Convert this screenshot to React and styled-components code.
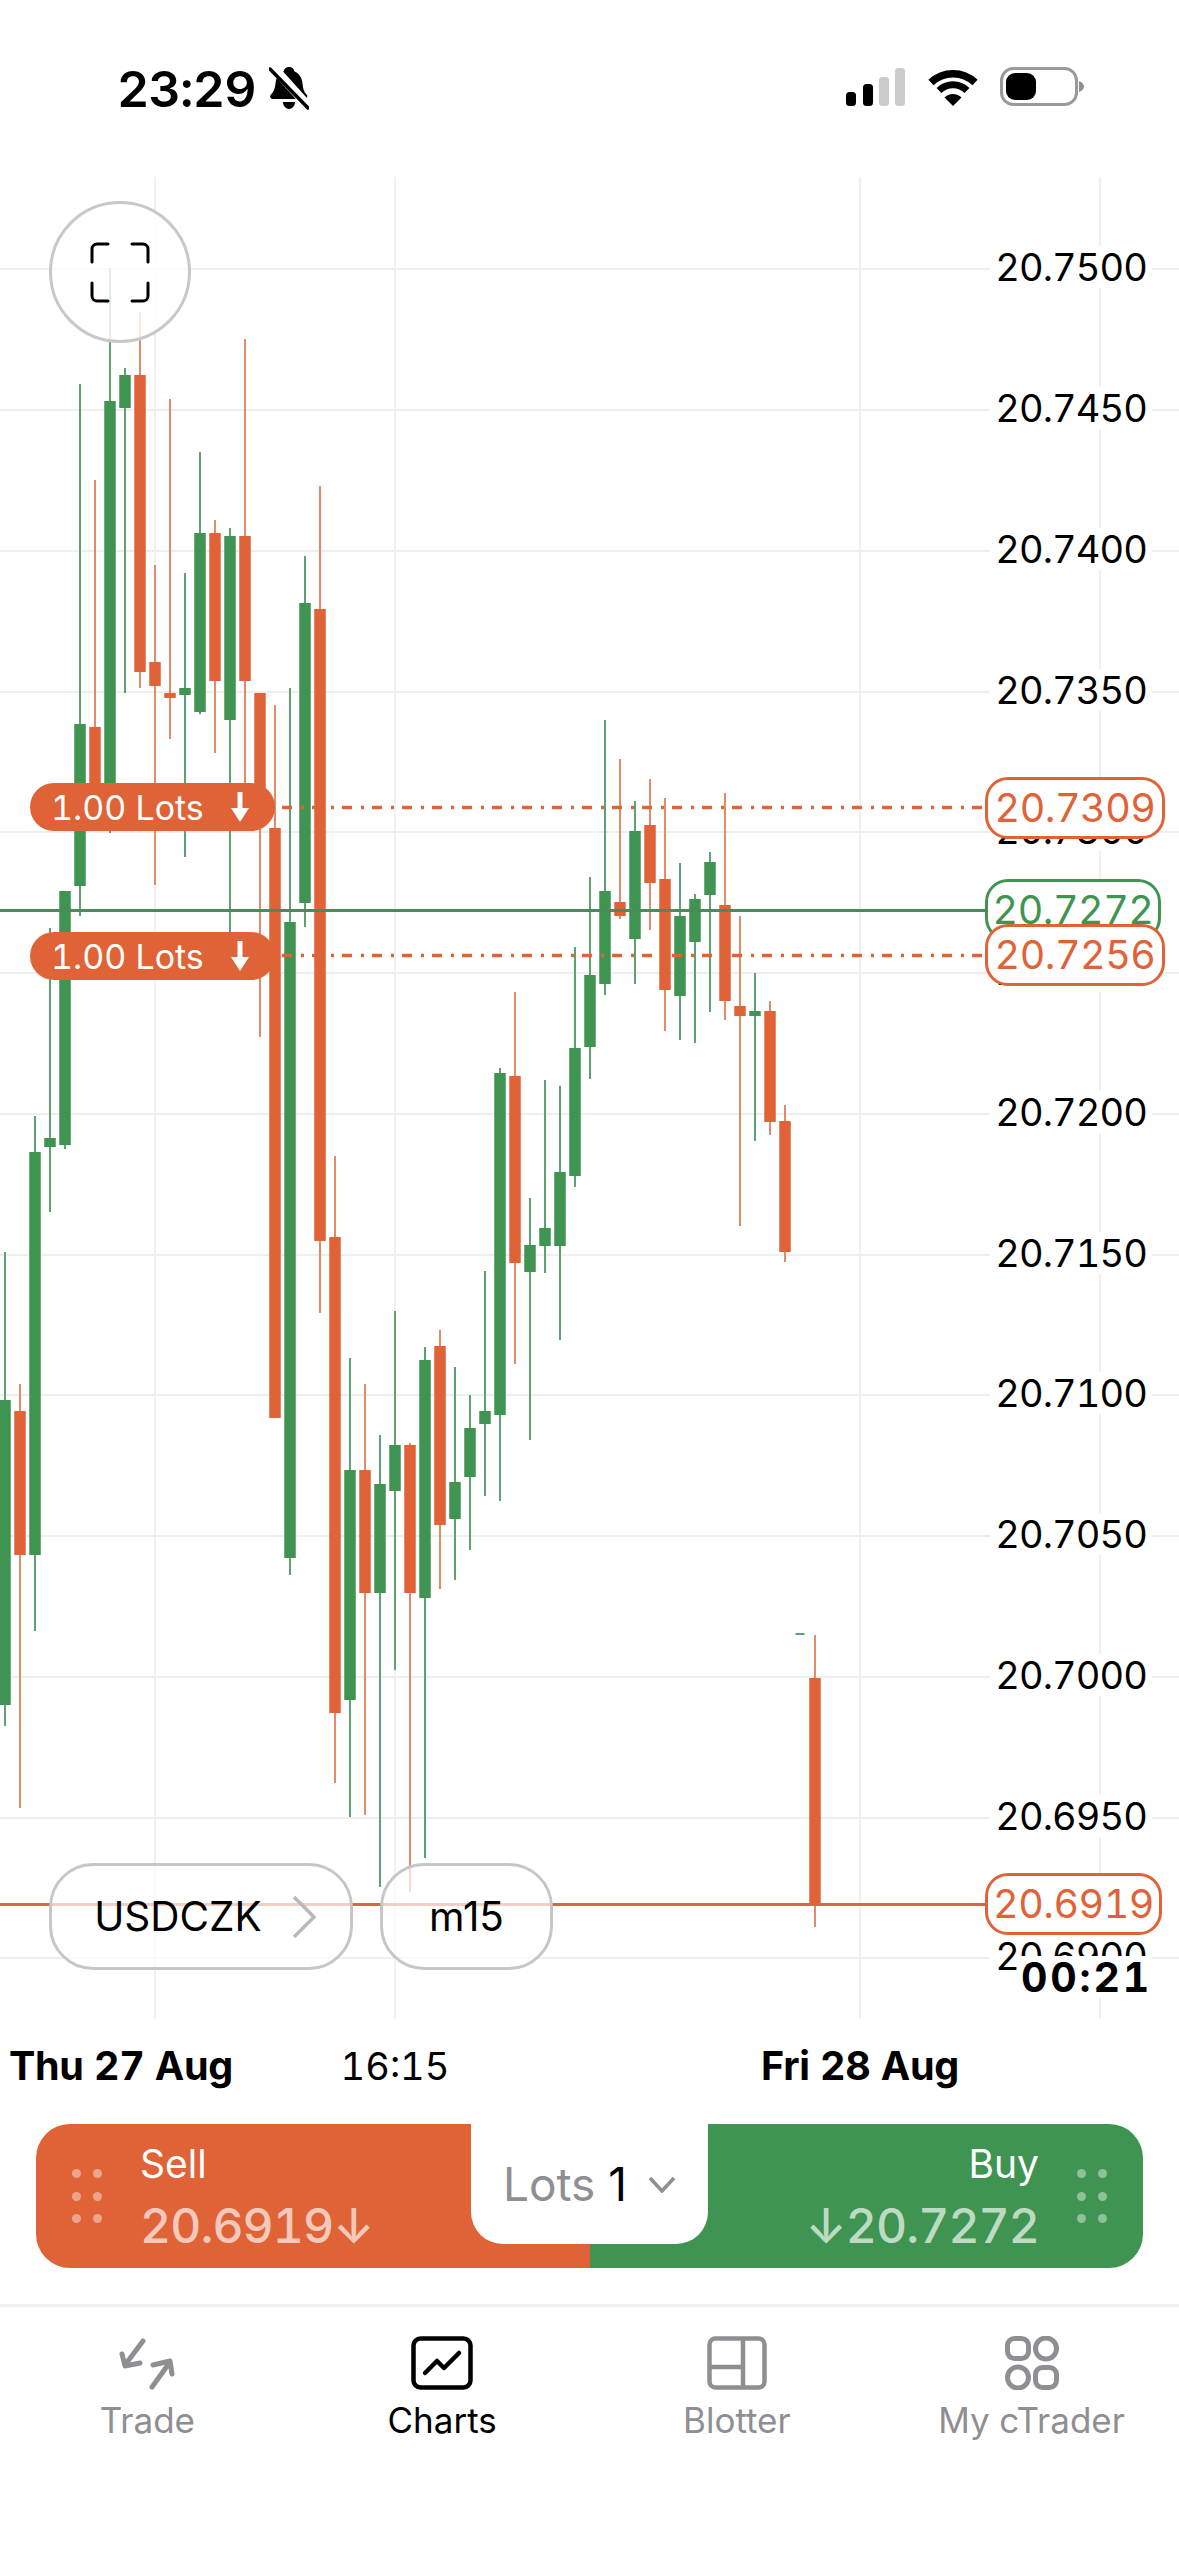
import React from 'react';
import styled, { createGlobalStyle } from 'styled-components';

const ORANGE = '#E06338';
const GREEN = '#3F9452';
const GREY = '#8E8E93';

const GlobalStyle = createGlobalStyle`
  html, body {
    margin: 0;
    padding: 0;
    background: #fff;
    font-family: Inter, "Liberation Sans", sans-serif;
    font-variant-numeric: tabular-nums;
    color: #000;
  }
`;

// [wick top, body top, body bottom, wick bottom, up?], one candle every 15px from x = 5
const CANDLES = [
  [1252, 1400, 1705, 1726, 1], [1384, 1411, 1555, 1808, 0], [1116, 1152, 1555, 1631, 1],
  [928, 1138, 1147, 1212, 1], [891, 891, 1145, 1149, 1], [384, 724, 886, 916, 1],
  [480, 727, 810, 825, 0], [268, 401, 815, 833, 1], [368, 375, 408, 693, 1],
  [312, 375, 672, 688, 0], [565, 662, 686, 885, 0], [399, 693, 698, 739, 0],
  [573, 688, 695, 857, 1], [452, 533, 712, 714, 1], [520, 533, 681, 753, 0],
  [528, 536, 720, 940, 1], [339, 536, 681, 800, 0], [693, 693, 800, 1037, 0],
  [705, 828, 1418, 1418, 0], [688, 922, 1558, 1575, 1], [556, 603, 903, 927, 1],
  [486, 609, 1241, 1313, 0], [1156, 1237, 1713, 1783, 0], [1358, 1470, 1700, 1817, 1],
  [1384, 1470, 1593, 1815, 0], [1435, 1484, 1593, 1887, 1], [1311, 1445, 1491, 1670, 1],
  [1443, 1445, 1593, 1892, 0], [1347, 1360, 1598, 1858, 1], [1330, 1346, 1525, 1589, 0],
  [1367, 1482, 1519, 1580, 1], [1395, 1428, 1477, 1550, 1], [1271, 1411, 1424, 1496, 1],
  [1068, 1073, 1415, 1501, 1], [992, 1076, 1263, 1364, 0], [1198, 1245, 1272, 1440, 1],
  [1080, 1228, 1246, 1273, 1], [1086, 1172, 1246, 1340, 1], [947, 1048, 1176, 1187, 1],
  [877, 975, 1047, 1079, 1], [720, 891, 984, 995, 1], [759, 902, 916, 919, 0],
  [801, 831, 939, 984, 1], [779, 825, 883, 930, 0], [798, 879, 990, 1031, 0],
  [863, 916, 996, 1040, 1], [894, 899, 942, 1043, 1], [852, 862, 895, 1012, 1],
  [793, 905, 1001, 1020, 0], [916, 1006, 1016, 1226, 0], [973, 1011, 1016, 1141, 1],
  [1001, 1011, 1122, 1135, 0], [1105, 1121, 1252, 1262, 0],
];

const GRID_Y = [269, 410, 551, 692, 832, 973, 1114, 1255, 1395, 1536, 1677, 1818, 1958];
const GRID_X = [155, 395, 860, 1100];
const LEVELS = ['20.7500', '20.7450', '20.7400', '20.7350', '20.7300', '20.7250', '20.7200', '20.7150', '20.7100', '20.7050', '20.7000', '20.6950', '20.6900'];

const Page = styled.div`
  width: 1179px;
  height: 2556px;
  overflow: hidden;
  display: flex;
  flex-direction: column;
  background: #fff;
`;

const StatusBar = styled.div`
  height: 177px;
  box-sizing: border-box;
  padding: 67px 95px 0 117px;
  display: flex;
  justify-content: space-between;
  align-items: flex-start;
`;

const StatusGroup = styled.div`
  display: flex;
  align-items: center;
  gap: ${(p) => p.$gap}px;
`;

const Clock = styled.span`
  font-size: 50px;
  line-height: 42px;
  font-weight: 600;
  letter-spacing: -0.8px;
`;

const Chart = styled.div`
  position: relative;
  height: 1842px;
  flex: none;
`;

const ChartSvg = styled.svg`
  display: block;
`;

const AxisLabel = styled.span`
  position: absolute;
  right: 27px;
  top: ${(p) => p.$y - 177 - 23}px;
  padding: 0 5px;
  background: #fff;
  font-size: 38px;
  line-height: 42px;
  letter-spacing: -0.9px;
`;

const PriceTag = styled.span`
  position: absolute;
  left: 985px;
  top: ${(p) => p.$y - 177 - 31}px;
  width: ${(p) => p.$w}px;
  height: 62px;
  box-sizing: border-box;
  border: 3px solid ${(p) => p.$color};
  border-radius: 23px;
  background: #fff;
  color: ${(p) => p.$color};
  font-size: 39.5px;
  line-height: 56px;
  letter-spacing: -0.5px;
  text-align: center;
  white-space: nowrap;
`;

const Countdown = styled.span`
  position: absolute;
  right: 27px;
  top: ${1956 - 177}px;
  padding: 0 0 0 2px;
  background: #fff;
  font-size: 41px;
  line-height: 42px;
  font-weight: 700;
  letter-spacing: 2.8px;
`;

const LotPill = styled.div`
  position: absolute;
  left: 30px;
  top: ${(p) => p.$y - 177}px;
  width: 245px;
  height: 48px;
  box-sizing: border-box;
  padding: 0 26px 0 21px;
  border-radius: 24px;
  background: ${ORANGE};
  color: #fff;
  font-size: 34px;
  display: flex;
  align-items: center;
  justify-content: space-between;
`;

const FullscreenButton = styled.div`
  position: absolute;
  left: 49px;
  top: ${201 - 177}px;
  width: 142px;
  height: 142px;
  box-sizing: border-box;
  border: 3px solid #c8c8c8;
  border-radius: 50%;
  background: rgba(255, 255, 255, 0.82);
  display: flex;
  align-items: center;
  justify-content: center;
`;

const ChartControls = styled.div`
  position: absolute;
  left: 49px;
  top: ${1863 - 177}px;
  display: flex;
  gap: 27px;
`;

const ControlButton = styled.div`
  width: ${(p) => p.$w}px;
  height: 107px;
  box-sizing: border-box;
  padding-left: ${(p) => p.$pad || 0}px;
  border: 3px solid #c6c6c6;
  border-radius: 44px;
  background: rgba(255, 255, 255, 0.68);
  font-size: 40.5px;
  font-variant-numeric: normal;
  display: flex;
  align-items: center;
  justify-content: center;
  gap: 30px;
`;

const DateAxis = styled.div`
  height: 105px;
  flex: none;
  box-sizing: border-box;
  padding: 23px 0 0 9px;
  display: grid;
  grid-template-columns: 286px 200px 265px 200px;
  align-items: start;
`;

const DateLabel = styled.span`
  grid-column: ${(p) => p.$col};
  font-size: ${(p) => (p.$bold ? 39.5 : 38)}px;
  line-height: 48px;
  font-weight: ${(p) => (p.$bold ? 700 : 400)};
  letter-spacing: ${(p) => (p.$bold ? -0.3 : 0)}px;
  text-align: ${(p) => (p.$center ? 'center' : 'left')};
  white-space: nowrap;
`;

const TradePanel = styled.div`
  position: relative;
  height: 144px;
  flex: none;
  margin: 0 36px;
  border-radius: 34px;
  overflow: hidden;
  display: flex;
`;

const Side = styled.div`
  flex: 1;
  box-sizing: border-box;
  background: ${(p) => p.$bg};
  padding: 0 36px;
  display: flex;
  flex-direction: ${(p) => (p.$reverse ? 'row-reverse' : 'row')};
  gap: 38px;
`;

const Grip = styled.div`
  margin-top: 45px;
  display: grid;
  grid-template-columns: 9px 9px;
  grid-auto-rows: 9px;
  gap: 13.5px 12px;
  align-self: flex-start;
`;

const GripDot = styled.i`
  border-radius: 50%;
  background: rgba(255, 255, 255, 0.42);
`;

const Quote = styled.div`
  padding-top: 18px;
  display: flex;
  flex-direction: column;
  align-items: ${(p) => (p.$end ? 'flex-end' : 'flex-start')};
`;

const QuoteName = styled.span`
  color: #fff;
  font-size: 39px;
  line-height: 44px;
`;

const QuotePrice = styled.span`
  margin-top: 13px;
  color: rgba(255, 255, 255, 0.68);
  font-size: 48px;
  line-height: 54px;
  font-weight: 500;
  letter-spacing: -0.9px;
  white-space: nowrap;
`;

const LotsBox = styled.div`
  position: absolute;
  left: 435px;
  top: 0;
  width: 237px;
  height: 120px;
  border-radius: 0 0 32px 32px;
  background: #fff;
  font-size: 46px;
  font-variant-numeric: normal;
  display: flex;
  align-items: center;
  justify-content: center;
  gap: 21px;
`;

const LotsName = styled.span`
  color: ${GREY};
`;

const TabBar = styled.div`
  flex: 1;
  margin-top: 36px;
  border-top: 3px solid #eeeef0;
  padding-top: 29px;
  display: grid;
  grid-template-columns: repeat(4, 1fr);
  align-items: start;
`;

const Tab = styled.div`
  display: flex;
  flex-direction: column;
  align-items: center;
  gap: 9px;
  color: ${(p) => (p.$active ? '#000' : GREY)};
`;

const TabIcon = styled.svg`
  display: block;
  height: 54px;
`;

const TabLabel = styled.span`
  font-size: 35px;
  line-height: 42px;
`;

function BellSlash() {
  return (
    <svg width="40" height="43" viewBox="0 0 40 43">
      <path d="M20 0c3 0 5 2 5.500 4.500 5 2 7.500 6.500 8 12 .4 5 1.500 8.500 4 11 1.500 1.500 1 4.500-2 4.500H4c-3 0-3.500-3-2-4.500 2.500-2.500 4-6 4.500-11 .5-5.500 3-10 8-12C15 2 17 0 20 0Z" fill="#000" />
      <path d="M14 35h12c0 4-3 7-6 7s-6-3-6-7Z" fill="#000" />
      <path d="M3 -1 41 41" stroke="#fff" strokeWidth="9" />
      <path d="M1 2 39 41" stroke="#000" strokeWidth="3.500" strokeLinecap="round" />
    </svg>
  );
}

function SignalBars() {
  return (
    <svg width="60" height="38" viewBox="0 0 60 38">
      <rect x="0" y="24" width="10" height="14" rx="3.500" fill="#000" />
      <rect x="17" y="16" width="10" height="22" rx="3.500" fill="#000" />
      <rect x="33" y="9" width="10" height="29" rx="3.500" fill="#cbcbcb" />
      <rect x="49" y="0" width="10" height="38" rx="3.500" fill="#cbcbcb" />
    </svg>
  );
}

function WifiIcon() {
  return (
    <svg width="50" height="38" viewBox="0 0 50 38">
      <path d="M3 14.500A32 32 0 0 1 47 14.500" fill="none" stroke="#000" strokeWidth="7.500" />
      <path d="M11 22.500A20 20 0 0 1 39 22.500" fill="none" stroke="#000" strokeWidth="7" />
      <path d="M25 38 16.500 29.500A12 12 0 0 1 33.500 29.500Z" fill="#000" />
    </svg>
  );
}

function BatteryIcon() {
  return (
    <svg width="84" height="39" viewBox="0 0 84 39">
      <rect x="1.500" y="1.500" width="75" height="36" rx="12" fill="none" stroke="#9a9a9a" strokeWidth="3" />
      <rect x="6" y="6" width="30" height="27" rx="9" fill="#000" />
      <path d="M79 14c3 1 5 3 5 5.500s-2 4.500-5 5.500Z" fill="#8f8f8f" />
    </svg>
  );
}

function CornersIcon() {
  return (
    <svg width="60" height="61" viewBox="0 0 60 61" fill="none" stroke="#000" strokeWidth="3" strokeLinecap="round">
      <path d="M2 20V7a5 5 0 0 1 5-5h11" />
      <path d="M42 2h11a5 5 0 0 1 5 5v13" />
      <path d="M2 41v13a5 5 0 0 0 5 5h11" />
      <path d="M42 59h11a5 5 0 0 0 5-5V41" />
    </svg>
  );
}

function DownArrow() {
  return (
    <svg width="18" height="30" viewBox="0 0 18 30">
      <path d="M6.500 0h5v16H18L9 30 0 16h6.500Z" fill="#fff" />
    </svg>
  );
}

function PriceChart() {
  return (
    <ChartSvg width="1179" height="1842" viewBox="0 177 1179 1842">
      {GRID_X.map((x) => (
        <line key={x} x1={x} x2={x} y1="177" y2="2019" stroke="#f0f0f0" strokeWidth="2" />
      ))}
      {GRID_Y.map((y) => (
        <line key={y} x1="0" x2="1179" y1={y} y2={y} stroke="#eeeeee" strokeWidth="2" />
      ))}
      {CANDLES.map(([top, open, close, bottom, up], i) => {
        const x = 5 + i * 15;
        return (
          <g key={i}>
            <rect x={x - 1} y={top} width="2" height={bottom - top} fill={up ? '#5FA171' : '#E28B6B'} />
            <rect x={x - 5.750} y={open} width="11.500" height={close - open} fill={up ? GREEN : ORANGE} />
          </g>
        );
      })}
      <rect x="795.500" y="1633" width="9" height="2" fill="#5FA171" />
      <rect x="814" y="1635" width="2" height="292" fill="#E28B6B" />
      <rect x="809.250" y="1678" width="11.500" height="226" fill={ORANGE} />
      <line x1="0" x2="985" y1="910.500" y2="910.500" stroke="#4B8A5B" strokeWidth="3" />
      <line x1="282" x2="985" y1="807.500" y2="807.500" stroke={ORANGE} strokeWidth="3.500" strokeDasharray="10 9 3 8" />
      <line x1="282" x2="985" y1="955.500" y2="955.500" stroke={ORANGE} strokeWidth="3.500" strokeDasharray="10 9 3 8" />
      <line x1="0" x2="985" y1="1904.500" y2="1904.500" stroke="#D4694A" strokeWidth="3" />
    </ChartSvg>
  );
}

function GripDots() {
  return (
    <Grip>
      {[0, 1, 2, 3, 4, 5].map((n) => (
        <GripDot key={n} />
      ))}
    </Grip>
  );
}

export default function App() {
  return (
    <Page>
      <GlobalStyle />
      <StatusBar>
        <StatusGroup $gap={13}>
          <Clock>23:29</Clock>
          <BellSlash />
        </StatusGroup>
        <StatusGroup $gap={22}>
          <SignalBars />
          <WifiIcon />
          <BatteryIcon />
        </StatusGroup>
      </StatusBar>

      <Chart>
        <PriceChart />
        {LEVELS.map((label, i) => (
          <AxisLabel key={label} $y={GRID_Y[i]}>{label}</AxisLabel>
        ))}
        <PriceTag $y={808} $w={180} $color={ORANGE}>20.7309</PriceTag>
        <PriceTag $y={910} $w={176} $color={GREEN}>20.7272</PriceTag>
        <PriceTag $y={955} $w={180} $color={ORANGE}>20.7256</PriceTag>
        <PriceTag $y={1904} $w={177} $color={ORANGE}>20.6919</PriceTag>
        <Countdown>00:21</Countdown>
        <LotPill $y={783}>1.00 Lots <DownArrow /></LotPill>
        <LotPill $y={932}>1.00 Lots <DownArrow /></LotPill>
        <FullscreenButton><CornersIcon /></FullscreenButton>
        <ChartControls>
          <ControlButton $w={304} $pad={8}>
            USDCZK
            <svg width="24" height="42" viewBox="0 0 24 42" fill="none" stroke="#b9b9b9" strokeWidth="3.500">
              <path d="M2 1 22 21 2 41" />
            </svg>
          </ControlButton>
          <ControlButton $w={173}>m15</ControlButton>
        </ChartControls>
      </Chart>

      <DateAxis>
        <DateLabel $col={1} $bold>Thu 27 Aug</DateLabel>
        <DateLabel $col={2} $center>16:15</DateLabel>
        <DateLabel $col={4} $center $bold>Fri 28 Aug</DateLabel>
      </DateAxis>

      <TradePanel>
        <Side $bg={ORANGE}>
          <GripDots />
          <Quote>
            <QuoteName>Sell</QuoteName>
            <QuotePrice>20.6919↓</QuotePrice>
          </Quote>
        </Side>
        <Side $bg={GREEN} $reverse>
          <GripDots />
          <Quote $end>
            <QuoteName>Buy</QuoteName>
            <QuotePrice>↓20.7272</QuotePrice>
          </Quote>
        </Side>
        <LotsBox>
          <span><LotsName>Lots</LotsName> 1</span>
          <svg width="28" height="17" viewBox="0 0 28 17" fill="none" stroke={GREY} strokeWidth="3.500">
            <path d="M2 2 14 15 26 2" />
          </svg>
        </LotsBox>
      </TradePanel>

      <TabBar>
        <Tab>
          <TabIcon width="58" viewBox="0 0 58 54" fill="none" stroke="currentColor" strokeWidth="5" strokeLinecap="round" strokeLinejoin="round">
            <path d="M25 5 7 29M4 18l3 12 15-3" />
            <path d="M34 51 52 26M35 29l17-4 2 13" />
          </TabIcon>
          <TabLabel>Trade</TabLabel>
        </Tab>
        <Tab $active>
          <TabIcon width="62" viewBox="0 0 62 54" fill="none" stroke="currentColor" strokeWidth="4.500" strokeLinecap="round" strokeLinejoin="round">
            <rect x="2.500" y="2.500" width="57" height="49" rx="7" />
            <path d="M14 37 26 25 33 32 48 17" />
          </TabIcon>
          <TabLabel>Charts</TabLabel>
        </Tab>
        <Tab>
          <TabIcon width="60" viewBox="0 0 60 54" fill="none" stroke="currentColor" strokeWidth="4.500">
            <rect x="2.500" y="2.500" width="55" height="49" rx="6" />
            <path d="M36 2.500V51.500M2.500 31H36" />
          </TabIcon>
          <TabLabel>Blotter</TabLabel>
        </Tab>
        <Tab>
          <TabIcon width="54" viewBox="0 0 54 54" fill="none" stroke="currentColor" strokeWidth="5">
            <rect x="2.500" y="2.500" width="21" height="20" rx="7" />
            <circle cx="41" cy="12.500" r="10.500" />
            <circle cx="13" cy="41.500" r="10.500" />
            <rect x="30.500" y="31.500" width="21" height="20" rx="7" />
          </TabIcon>
          <TabLabel>My cTrader</TabLabel>
        </Tab>
      </TabBar>
    </Page>
  );
}
